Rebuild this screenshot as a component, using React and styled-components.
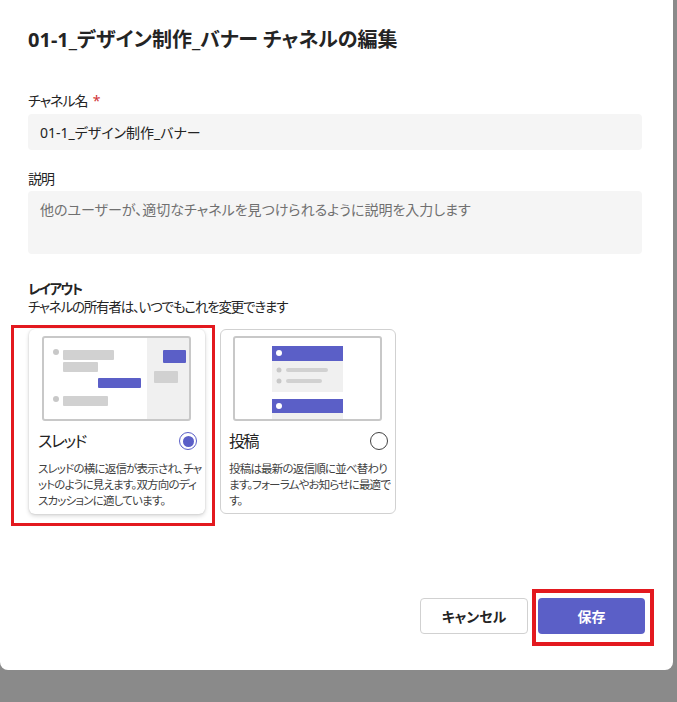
import React, { useState } from "react";
import styled, { createGlobalStyle, css } from "styled-components";

const FONT = `"Noto Sans", "Noto Sans CJK JP", sans-serif`;
const PURPLE = "#5b5fc7";
const MARK = "#e3191f";

const GlobalStyle = createGlobalStyle`
  html, body {
    margin: 0;
    padding: 0;
    background: #8a8a8a;
    font-family: ${FONT};
    font-feature-settings: "palt";
    color: #242424;
  }
  * { box-sizing: border-box; }
`;

// ダイアログ本体
const Dialog = styled.div`
  width: 673px;
  height: 670px;
  background: #fff;
  border-radius: 0 0 8px 8px;
  padding: 26px 28px 36px 28px;
  display: flex;
  flex-direction: column;
`;

const Title = styled.h1`
  margin: 0;
  font-size: 20px;
  line-height: 28px;
  font-weight: 700;
`;

const Form = styled.div`
  width: 614px;
  display: flex;
  flex-direction: column;
`;

const Field = styled.div`
  display: flex;
  flex-direction: column;
  margin-top: ${(p) => p.$top}px;
`;

const Label = styled.label`
  font-size: 14px;
  line-height: 20px;
  letter-spacing: -1px;
  margin-bottom: ${(p) => p.$gap || 3}px;
`;

const Required = styled.span`
  color: #d13438;
  margin-left: 5px;
`;

const boxStyle = css`
  width: 100%;
  border: none;
  outline: none;
  background: #f5f5f5;
  border-radius: 4px;
  font-family: ${FONT};
  font-feature-settings: "palt";
  font-size: 14px;
  line-height: 20px;
  color: #242424;
  padding: 0 12px;
  &::placeholder {
    color: #707070;
  }
`;

const TextInput = styled.input`
  ${boxStyle}
  height: 36px;
`;

const TextArea = styled.textarea`
  ${boxStyle}
  height: 63px;
  padding-top: 9px;
  resize: none;
`;

const LayoutHead = styled.div`
  margin-top: 26px;
  font-size: 13.5px;
  line-height: 18px;
`;

const LayoutTitle = styled.div`
  font-weight: 700;
  letter-spacing: -1.6px;
`;

const LayoutNote = styled.div`
  letter-spacing: -1.2px;
`;

const Cards = styled.div`
  display: flex;
  gap: 15px;
  margin-top: 13px;
  padding-left: 1px;
`;

const Card = styled.div`
  position: relative;
  width: 176px;
  height: 185px;
  border-radius: 6px;
  background: #fff;
  padding: 7px 8px 0 9px;
  display: flex;
  flex-direction: column;
  ${(p) =>
    p.$selected
      ? "box-shadow: 0 0 2px rgba(0,0,0,0.14), 0 2px 4px rgba(0,0,0,0.16);"
      : "border: 1px solid #d1d1d1; padding: 6px 7px 0 8px;"}
`;

// 赤い注釈の枠
const Marked = styled.div`
  position: relative;
  &::after {
    content: "";
    position: absolute;
    top: ${(p) => p.$t}px;
    left: ${(p) => p.$l}px;
    right: ${(p) => p.$r}px;
    bottom: ${(p) => p.$b}px;
    border: ${(p) => p.$w}px solid ${MARK};
    pointer-events: none;
  }
`;

const Preview = styled.svg`
  display: block;
  margin-left: 4px;
`;

const CardHead = styled.div`
  display: flex;
  align-items: center;
  justify-content: space-between;
  margin-top: 9px;
  height: 22px;
`;

const CardTitle = styled.div`
  font-size: 16px;
  line-height: 22px;
  letter-spacing: -1.5px;
  color: #242424;
`;

const Radio = styled.span`
  width: 18px;
  height: 18px;
  border-radius: 50%;
  border: 1.5px solid ${(p) => (p.$on ? PURPLE : "#424242")};
  display: flex;
  align-items: center;
  justify-content: center;
  &::after {
    content: "";
    width: 11px;
    height: 11px;
    border-radius: 50%;
    background: ${(p) => (p.$on ? PURPLE : "transparent")};
  }
`;

const CardDesc = styled.div`
  margin-top: 9px;
  font-size: 11.5px;
  line-height: 16px;
  letter-spacing: -0.8px;
  color: #424242;
  white-space: nowrap;
`;

const Footer = styled.div`
  margin-top: auto;
  display: flex;
  justify-content: flex-end;
  gap: 10px;
`;

const Button = styled.button`
  height: 36px;
  width: ${(p) => (p.$primary ? 107 : 108)}px;
  border-radius: 4px;
  font-family: ${FONT};
  font-feature-settings: "palt";
  font-size: 14px;
  font-weight: 700;
  cursor: pointer;
  ${(p) =>
    p.$primary
      ? `background: ${PURPLE}; color: #fff; border: none;`
      : "background: #fff; color: #242424; border: 1px solid #d1d1d1;"}
`;

function ThreadPreview() {
  return (
    <Preview width="149" height="85" viewBox="0 0 149 85">
      <rect x="1" y="1" width="147" height="83" fill="#fff" />
      <rect x="105" y="1" width="43" height="83" fill="#f0f0f0" />
      <circle cx="14" cy="16" r="3" fill="#c8c8c8" />
      <rect x="21" y="14" width="51" height="10" rx="1" fill="#d1d1d1" />
      <rect x="21" y="26" width="35" height="10" rx="1" fill="#d1d1d1" />
      <rect x="56" y="42" width="43" height="10" rx="1" fill={PURPLE} />
      <circle cx="14" cy="63" r="3" fill="#c8c8c8" />
      <rect x="21" y="60" width="45" height="10" rx="1" fill="#d1d1d1" />
      <rect x="121" y="14" width="23" height="13" rx="1" fill={PURPLE} />
      <rect x="112" y="35" width="24" height="12" rx="1" fill="#d1d1d1" />
      <rect x="1" y="1" width="147" height="83" rx="2" fill="none" stroke="#c8c8c8" strokeWidth="2" />
    </Preview>
  );
}

function PostPreview() {
  return (
    <Preview width="149" height="85" viewBox="0 0 149 85">
      <rect x="1" y="1" width="147" height="83" fill="#fff" />
      <rect x="39" y="10" width="71" height="15" fill={PURPLE} />
      <circle cx="46" cy="17" r="3" fill="#fff" />
      <rect x="39" y="25" width="71" height="31" fill="#f0f0f0" />
      <circle cx="46" cy="34" r="2.5" fill="#c8c8c8" />
      <rect x="53" y="32" width="42" height="4" rx="2" fill="#d1d1d1" />
      <circle cx="46" cy="45" r="2.5" fill="#c8c8c8" />
      <rect x="53" y="43" width="36" height="4" rx="2" fill="#d1d1d1" />
      <rect x="39" y="63" width="71" height="14" fill={PURPLE} />
      <circle cx="46" cy="70" r="3" fill="#fff" />
      <rect x="39" y="77" width="71" height="8" fill="#f0f0f0" />
      <rect x="1" y="1" width="147" height="83" rx="2" fill="none" stroke="#c8c8c8" strokeWidth="2" />
    </Preview>
  );
}

export default function App() {
  const [layout, setLayout] = useState("thread");
  const [name, setName] = useState("01-1_デザイン制作_バナー");
  const [desc, setDesc] = useState("");

  return (
    <>
      <GlobalStyle />
      <Dialog>
        <Title>01-1_デザイン制作_バナー チャネルの編集</Title>
        <Form>
          <Field $top={37}>
            <Label>
              チャネル名<Required>*</Required>
            </Label>
            <TextInput value={name} onChange={(e) => setName(e.target.value)} />
          </Field>
          <Field $top={19}>
            <Label $gap={2}>説明</Label>
            <TextArea
              value={desc}
              onChange={(e) => setDesc(e.target.value)}
              placeholder="他のユーザーが、適切なチャネルを見つけられるように説明を入力します"
            />
          </Field>
          <LayoutHead>
            <LayoutTitle>レイアウト</LayoutTitle>
            <LayoutNote>チャネルの所有者は、いつでもこれを変更できます</LayoutNote>
          </LayoutHead>
          <Cards>
            <Marked $t={-4} $l={-18} $r={-10} $b={-12} $w={3}>
              <Card $selected={layout === "thread"} onClick={() => setLayout("thread")}>
                <ThreadPreview />
                <CardHead>
                  <CardTitle>スレッド</CardTitle>
                  <Radio $on={layout === "thread"} />
                </CardHead>
                <CardDesc>
                  スレッドの横に返信が表示され、チャ
                  <br />
                  ットのように見えます。双方向のディ
                  <br />
                  スカッションに適しています。
                </CardDesc>
              </Card>
            </Marked>
            <Card $selected={layout === "post"} onClick={() => setLayout("post")}>
              <PostPreview />
              <CardHead>
                <CardTitle>投稿</CardTitle>
                <Radio $on={layout === "post"} />
              </CardHead>
              <CardDesc>
                投稿は最新の返信順に並べ替わり
                <br />
                ます。フォーラムやお知らせに最適で
                <br />
                す。
              </CardDesc>
            </Card>
          </Cards>
        </Form>
        <Footer>
          <Button>キャンセル</Button>
          <Marked $t={-9} $l={-6} $r={-9} $b={-12} $w={4}>
            <Button $primary>保存</Button>
          </Marked>
        </Footer>
      </Dialog>
    </>
  );
}
